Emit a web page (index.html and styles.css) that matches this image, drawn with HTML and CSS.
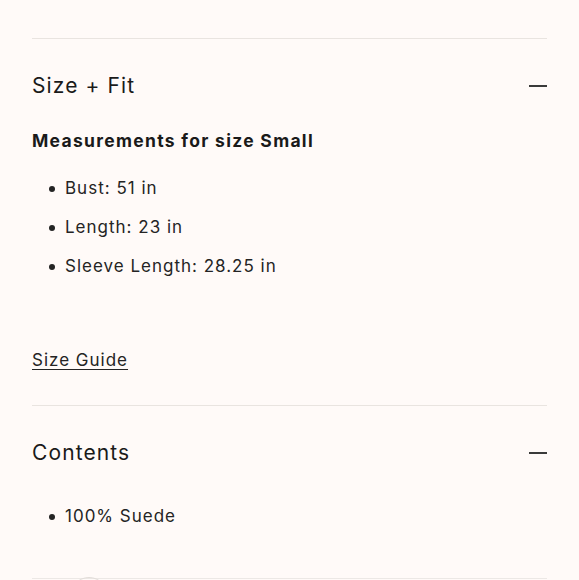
FILE: index.html
```html
<!DOCTYPE html>
<html lang="en">
<head>
<meta charset="utf-8">
<title>Product details</title>
<link rel="stylesheet" href="styles.css">
</head>
<body>
<div class="page">
  <section class="acc">
    <div class="acc-head">
      <h2 class="acc-title">Size + Fit</h2>
      <span class="minus"></span>
    </div>
    <div class="acc-body fit">
      <p class="lead">Measurements for size Small</p>
      <ul class="list">
        <li>Bust: 51 in</li>
        <li>Length: 23 in</li>
        <li>Sleeve Length: 28.25 in</li>
      </ul>
      <a class="guide" href="#">Size Guide</a>
    </div>
  </section>
  <section class="acc">
    <div class="acc-head">
      <h2 class="acc-title">Contents</h2>
      <span class="minus"></span>
    </div>
    <div class="acc-body contents">
      <ul class="list">
        <li>100% Suede</li>
      </ul>
    </div>
  </section>
  <div class="foot">
    <span class="circle"></span>
  </div>
</div>
</body>
</html>
```
FILE: styles.css
```css
html, body {
  margin: 0;
  padding: 0;
  background: #fffaf8;
}
body {
  font-family: Inter, "Liberation Sans", sans-serif;
  color: #222222;
}
.page {
  padding: 38px 32px 0;
  height: 580px;
  box-sizing: border-box;
  overflow: hidden;
}
.acc {
  border-top: 1px solid #e9e4e0;
}
.acc-head {
  height: 92px;
  padding-top: 2px;
  box-sizing: border-box;
  display: flex;
  align-items: center;
  justify-content: space-between;
}
.acc-title {
  margin: 0;
  font-weight: 400;
  font-size: 21px;
  letter-spacing: 1.1px;
  line-height: 30px;
  color: #1a1a1a;
}
.minus {
  width: 18px;
  height: 1.5px;
  background: #3a3a3a;
}
.acc-body.fit {
  padding-bottom: 33px;
}
.lead {
  margin: 0;
  font-weight: 700;
  font-size: 17.5px;
  line-height: 20px;
  letter-spacing: 1.3px;
  color: #1a1a1a;
}
.list {
  margin: 0;
  padding: 0;
  list-style: none;
  font-size: 17px;
  line-height: 39px;
  letter-spacing: 1px;
  color: #242424;
}
.list li {
  display: flex;
  align-items: center;
}
.list li::before {
  content: "";
  width: 6px;
  height: 6px;
  border-radius: 50%;
  background: #242424;
  margin: 1px 10px 0 17px;
}
.fit .list {
  margin-top: 17.5px;
}
.contents .list {
  margin-top: -1.5px;
}
.guide {
  display: block;
  margin-top: 62.5px;
  font-size: 17px;
  line-height: 24px;
  letter-spacing: 1px;
  color: #242424;
  text-decoration: underline;
  text-underline-offset: 3px;
  width: max-content;
}
.foot {
  margin-top: 42px;
  border-top: 1px solid #ece8e5;
  position: relative;
}
.circle {
  position: absolute;
  left: 38px;
  top: -2px;
  width: 36px;
  height: 36px;
  border: 1px solid #e2ddd9;
  border-radius: 50%;
}
```
